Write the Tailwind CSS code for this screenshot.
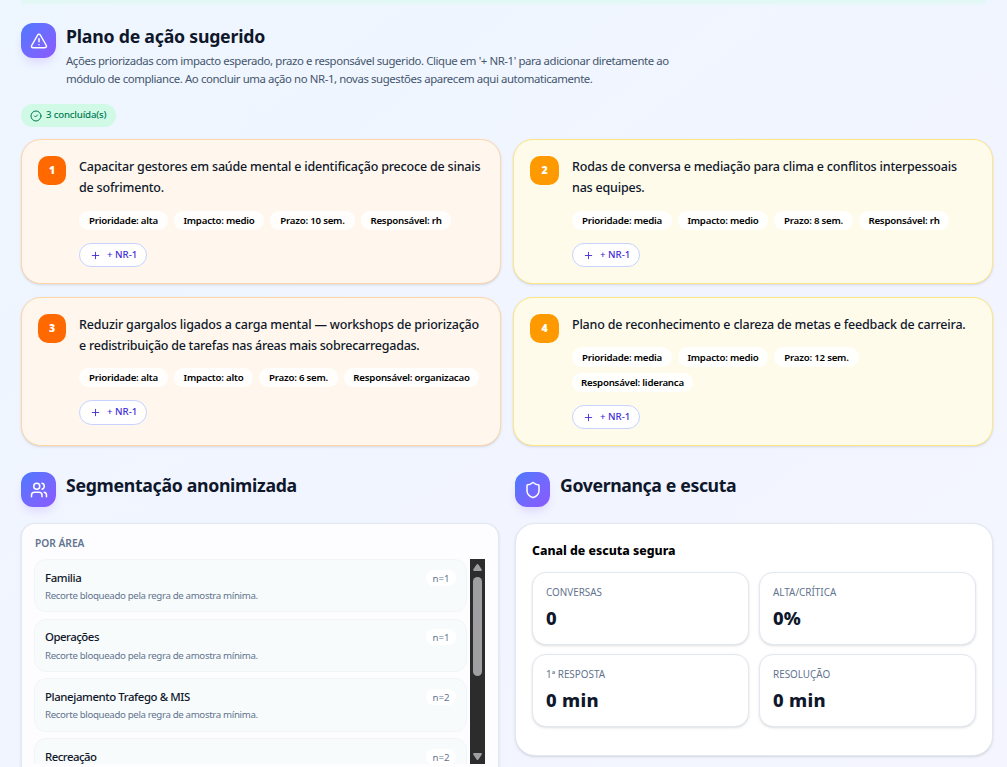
<!DOCTYPE html>
<html lang="pt-BR">

<head>
    <meta charset="UTF-8">
    <meta name="viewport" content="width=device-width, initial-scale=1.0">
    <title>Plano de ação</title>
    <script src="https://cdn.jsdelivr.net/npm/@tailwindcss/browser@4"></script>
</head>

<body class="h-screen overflow-hidden bg-linear-to-br from-[#eef6ff] via-[#f1f5ff] to-[#f4f5ff] font-['Noto_Sans',sans-serif] text-slate-900">

    <!-- Bottom edge of the previous panel -->
    <div class="mx-[21px] h-[3px] rounded-b-full bg-[#e2f8f5] shadow-[0_1px_4px_#e2f8f5]"></div>

    <main class="px-[21px] pr-[14px]">

        <!-- Action plan -->
        <section>
            <div class="flex items-start gap-[10px] pt-5">
                <div class="flex size-[35px] shrink-0 items-center justify-center rounded-[12px] bg-linear-to-br from-[#4a79ff] to-[#8a58ff] text-white shadow-[0_6px_10px_-2px_#ddd6fe]">
                    <svg class="size-[18px]" viewBox="0 0 24 24" fill="none" stroke="currentColor" stroke-width="2" stroke-linecap="round" stroke-linejoin="round">
                        <path d="m21.73 18-8-14a2 2 0 0 0-3.48 0l-8 14A2 2 0 0 0 4 21h16a2 2 0 0 0 1.73-3" />
                        <path d="M12 9v4" />
                        <path d="M12 17h.01" />
                    </svg>
                </div>
                <div>
                    <h2 class="text-[17.7px] leading-[26px] font-bold tracking-[-0.22px]">Plano de ação sugerido</h2>
                    <p class="mt-[3px] text-[11.4px] leading-[18px] tracking-[-0.41px] whitespace-nowrap text-slate-600">Ações priorizadas com impacto esperado, prazo e responsável sugerido. Clique em '+ NR-1' para adicionar diretamente ao<br>módulo de compliance. Ao concluir uma ação no NR-1, novas sugestões aparecem aqui automaticamente.</p>
                </div>
            </div>

            <div class="mt-4 flex h-[23px] w-[95px] items-center gap-1 rounded-full bg-[#d0fae5] pl-[9px] text-[9.7px] font-medium tracking-[-0.2px] whitespace-nowrap text-[#007a55]">
                <svg class="size-[12px] shrink-0" viewBox="0 0 24 24" fill="none" stroke="currentColor" stroke-width="2" stroke-linecap="round" stroke-linejoin="round">
                    <circle cx="12" cy="12" r="10" />
                    <path d="m9 12 2 2 4-4" />
                </svg>
                3 concluída(s)
            </div>

            <div class="mt-3 grid grid-cols-2 grid-rows-[145px_149px] gap-x-3 gap-y-[13px]">
                <article class="flex items-start gap-[13px] rounded-[20px] border border-[#ffd6a8] bg-[#fff7ed] pt-4 pl-4 shadow-sm">
                    <span class="flex h-[29px] w-[28px] shrink-0 items-center justify-center rounded-[10px] bg-[#ff6900] text-[10.5px] font-black text-white">1</span>
                    <div>
                        <p class="text-[12.5px] leading-[21px] font-medium tracking-[-0.19px] whitespace-nowrap">Capacitar gestores em saúde mental e identificação precoce de sinais<br>de sofrimento.</p>
                        <div class="mt-[13px] flex gap-[6px] text-[9.7px] leading-[19px] font-semibold tracking-[-0.23px] whitespace-nowrap text-black">
                            <span class="w-[89px] rounded-full bg-white/90 text-center">Prioridade: alta</span>
                            <span class="w-[90px] rounded-full bg-white/90 text-center">Impacto: medio</span>
                            <span class="w-[85px] rounded-full bg-white/90 text-center">Prazo: 10 sem.</span>
                            <span class="w-[90px] rounded-full bg-white/90 text-center">Responsável: rh</span>
                        </div>
                        <button class="mt-[13px] flex h-6 w-[68px] items-center gap-[6px] rounded-full border border-[#c6d2ff] bg-white pt-px pl-[10px] text-[9.7px] font-medium text-[#432dd7]">
                            <svg class="-mt-px size-[11px] shrink-0" viewBox="0 0 24 24" fill="none" stroke="currentColor" stroke-width="2" stroke-linecap="round"><path d="M5 12h14M12 5v14" /></svg>
                            + NR-1
                        </button>
                    </div>
                </article>

                <article class="flex items-start gap-[13px] rounded-[20px] border border-[#fee685] bg-[#fffbeb] pt-4 pl-4 shadow-sm">
                    <span class="flex size-[29px] shrink-0 items-center justify-center rounded-[10px] bg-[#fe9a00] text-[10.5px] font-black text-white">2</span>
                    <div>
                        <p class="text-[12.5px] leading-[21px] font-medium tracking-[-0.19px] whitespace-nowrap">Rodas de conversa e mediação para clima e conflitos interpessoais<br>nas equipes.</p>
                        <div class="mt-[13px] flex gap-[6px] text-[9.7px] leading-[19px] font-semibold tracking-[-0.23px] whitespace-nowrap text-black">
                            <span class="w-[100px] rounded-full bg-white/90 text-center">Prioridade: media</span>
                            <span class="w-[90px] rounded-full bg-white/90 text-center">Impacto: medio</span>
                            <span class="w-[79px] rounded-full bg-white/90 text-center">Prazo: 8 sem.</span>
                            <span class="w-[90px] rounded-full bg-white/90 text-center">Responsável: rh</span>
                        </div>
                        <button class="mt-[13px] flex h-6 w-[68px] items-center gap-[6px] rounded-full border border-[#c6d2ff] bg-white pt-px pl-[10px] text-[9.7px] font-medium text-[#432dd7]">
                            <svg class="-mt-px size-[11px] shrink-0" viewBox="0 0 24 24" fill="none" stroke="currentColor" stroke-width="2" stroke-linecap="round"><path d="M5 12h14M12 5v14" /></svg>
                            + NR-1
                        </button>
                    </div>
                </article>

                <article class="flex items-start gap-[13px] rounded-[20px] border border-[#ffd6a8] bg-[#fff7ed] pt-4 pl-4 shadow-sm">
                    <span class="flex h-[29px] w-[28px] shrink-0 items-center justify-center rounded-[10px] bg-[#ff6900] text-[10.5px] font-black text-white">3</span>
                    <div>
                        <p class="text-[12.5px] leading-[21px] font-medium tracking-[-0.18px] whitespace-nowrap">Reduzir gargalos ligados a carga mental — workshops de priorização<br><span class="tracking-[-0.25px]">e redistribuição de tarefas nas áreas mais sobrecarregadas.</span></p>
                        <div class="mt-3 flex gap-[6px] text-[9.7px] leading-[19px] font-semibold tracking-[-0.23px] whitespace-nowrap text-black">
                            <span class="w-[89px] rounded-full bg-white/90 text-center">Prioridade: alta</span>
                            <span class="w-[79px] rounded-full bg-white/90 text-center">Impacto: alto</span>
                            <span class="w-[79px] rounded-full bg-white/90 text-center">Prazo: 6 sem.</span>
                            <span class="w-[135px] rounded-full bg-white/90 text-center">Responsável: organizacao</span>
                        </div>
                        <button class="mt-[13px] flex h-[25px] w-[68px] items-center gap-[6px] rounded-full border border-[#c6d2ff] bg-white pl-[10px] text-[9.7px] font-medium text-[#432dd7]">
                            <svg class="size-[11px] shrink-0" viewBox="0 0 24 24" fill="none" stroke="currentColor" stroke-width="2" stroke-linecap="round"><path d="M5 12h14M12 5v14" /></svg>
                            + NR-1
                        </button>
                    </div>
                </article>

                <article class="flex items-start gap-[13px] rounded-[20px] border border-[#fee685] bg-[#fffbeb] pt-4 pl-4 shadow-sm">
                    <span class="flex size-[29px] shrink-0 items-center justify-center rounded-[10px] bg-[#fe9a00] text-[10.5px] font-black text-white">4</span>
                    <div>
                        <p class="text-[12.5px] leading-[21px] font-medium tracking-[-0.19px] whitespace-nowrap">Plano de reconhecimento e clareza de metas e feedback de carreira.</p>
                        <div class="mt-3 flex w-[400px] flex-wrap gap-x-[6px] gap-y-[6px] text-[9.7px] leading-[19px] font-semibold tracking-[-0.23px] whitespace-nowrap text-black">
                            <span class="h-5 w-[100px] rounded-full bg-white/90 pt-px text-center">Prioridade: media</span>
                            <span class="h-5 w-[90px] rounded-full bg-white/90 pt-px text-center">Impacto: medio</span>
                            <span class="h-5 w-[85px] rounded-full bg-white/90 pt-px text-center">Prazo: 12 sem.</span>
                            <span class="w-[121px] rounded-full bg-white/90 text-center">Responsável: lideranca</span>
                        </div>
                        <button class="mt-[13px] flex h-6 w-[68px] items-center gap-[6px] rounded-full border border-[#c6d2ff] bg-white pt-px pl-[10px] text-[9.7px] font-medium text-[#432dd7]">
                            <svg class="-mt-px size-[11px] shrink-0" viewBox="0 0 24 24" fill="none" stroke="currentColor" stroke-width="2" stroke-linecap="round"><path d="M5 12h14M12 5v14" /></svg>
                            + NR-1
                        </button>
                    </div>
                </article>
            </div>
        </section>

        <div class="mt-[26px] grid grid-cols-2 gap-4">

            <!-- Segmentation -->
            <section>
                <div class="flex items-start gap-[10px]">
                    <div class="flex size-[35px] shrink-0 items-center justify-center rounded-[12px] bg-linear-to-br from-[#4a79ff] to-[#8a58ff] text-white shadow-[0_6px_10px_-2px_#ddd6fe]">
                        <svg class="size-[18px]" viewBox="0 0 24 24" fill="none" stroke="currentColor" stroke-width="2" stroke-linecap="round" stroke-linejoin="round">
                            <path d="M16 21v-2a4 4 0 0 0-4-4H6a4 4 0 0 0-4 4v2" />
                            <path d="M16 3.13a4 4 0 0 1 0 7.75" />
                            <path d="M22 21v-2a4 4 0 0 0-3-3.87" />
                            <circle cx="9" cy="7" r="4" />
                        </svg>
                    </div>
                    <h2 class="text-[17.7px] leading-[26px] font-bold tracking-[-0.31px]">Segmentação anonimizada</h2>
                </div>
                <div class="mt-4 h-[244px] rounded-t-[14px] border border-b-0 border-slate-200 bg-[#fdfdff] px-3 pt-[11px] shadow-sm">
                    <h3 class="pl-px text-[10.2px] leading-[17px] font-semibold text-slate-500">POR ÁREA</h3>
                    <div class="mt-[7px] flex h-[205px] overflow-hidden">
                        <div class="flex w-[433px] flex-col gap-[7px]">
                            <div class="flex h-[53px] shrink-0 justify-between rounded-[12px] border border-slate-100 bg-[#f8fbfc] px-[10px] pt-[10px]">
                                <div class="-mt-px">
                                    <p class="text-[11.4px] leading-[17px] font-medium tracking-[-0.38px]">Familia</p>
                                    <p class="mt-[2px] text-[9.7px] leading-4 tracking-[-0.35px] text-slate-500">Recorte bloqueado pela regra de amostra mínima.</p>
                                </div>
                                <span class="h-4 w-[30px] rounded-full bg-white text-center text-[9.7px] leading-[17px] text-slate-500">n=1</span>
                            </div>
                            <div class="flex h-[53px] shrink-0 justify-between rounded-[12px] border border-slate-100 bg-[#f8fbfc] px-[10px] pt-[9px]">
                                <div class="-mt-px">
                                    <p class="text-[11.4px] leading-[17px] font-medium tracking-[-0.48px]">Operações</p>
                                    <p class="mt-[3px] text-[9.7px] leading-4 tracking-[-0.35px] text-slate-500">Recorte bloqueado pela regra de amostra mínima.</p>
                                </div>
                                <span class="h-4 w-[30px] rounded-full bg-white text-center text-[9.7px] leading-[17px] text-slate-500">n=1</span>
                            </div>
                            <div class="-mt-px flex h-[54px] shrink-0 justify-between rounded-[12px] border border-slate-100 bg-[#f8fbfc] px-[10px] pt-[10px]">
                                <div class="-mt-px">
                                    <p class="text-[11.4px] leading-[17px] font-medium tracking-[-0.4px]">Planejamento Trafego &amp; MIS</p>
                                    <p class="mt-[2px] text-[9.7px] leading-4 tracking-[-0.35px] text-slate-500">Recorte bloqueado pela regra de amostra mínima.</p>
                                </div>
                                <span class="h-4 w-[30px] rounded-full bg-white text-center text-[9.7px] leading-[17px] text-slate-500">n=2</span>
                            </div>
                            <div class="-mt-px flex h-[54px] shrink-0 justify-between rounded-[12px] border border-slate-100 bg-[#f8fbfc] px-[10px] pt-[10px]">
                                <p class="-mt-px text-[11.4px] leading-[17px] font-medium tracking-[-0.5px]">Recreação</p>
                                <span class="h-4 w-[30px] rounded-full bg-white text-center text-[9.7px] leading-[17px] text-slate-500">n=2</span>
                            </div>
                        </div>
                        <!-- Scrollbar -->
                        <div class="ml-[3px] flex w-[15px] shrink-0 flex-col items-center bg-[#2c2c2c] text-[#9f9fa3]">
                            <svg class="mt-[5px] h-[7px] w-[9px] shrink-0" viewBox="0 0 9 7" fill="currentColor"><path d="M4.5 0 Q5 0 5.4 .6 L8.8 5.6 Q9 7 8 7 H1 Q0 7 .2 5.6 L3.6 .6 Q4 0 4.5 0Z" /></svg>
                            <div class="mt-[6px] h-[99px] w-[9px] shrink-0 rounded-full bg-[#9f9fa3]"></div>
                            <svg class="mt-auto mb-[4px] h-[7px] w-[9px] shrink-0" viewBox="0 0 9 7" fill="currentColor"><path d="M4.5 7 Q5 7 5.4 6.4 L8.8 1.4 Q9 0 8 0 H1 Q0 0 .2 1.4 L3.6 6.4 Q4 7 4.5 7Z" /></svg>
                        </div>
                    </div>
                </div>
            </section>

            <!-- Governance -->
            <section>
                <div class="flex items-start gap-[10px]">
                    <div class="flex size-[35px] shrink-0 items-center justify-center rounded-[12px] bg-linear-to-br from-[#4a79ff] to-[#8a58ff] text-white shadow-[0_6px_10px_-2px_#ddd6fe]">
                        <svg class="size-[18px]" viewBox="0 0 24 24" fill="none" stroke="currentColor" stroke-width="2" stroke-linecap="round" stroke-linejoin="round">
                            <path d="M20 13c0 5-3.5 7.5-7.66 8.95a1 1 0 0 1-.67-.01C7.5 20.5 4 18 4 13V6a1 1 0 0 1 1-1c2 0 4.5-1.2 6.24-2.72a1.17 1.17 0 0 1 1.52 0C14.51 3.81 17 5 19 5a1 1 0 0 1 1 1z" />
                        </svg>
                    </div>
                    <h2 class="text-[17.7px] leading-[26px] font-bold tracking-[-0.38px]">Governança e escuta</h2>
                </div>
                <div class="mt-4 h-[233px] rounded-[20px] border border-slate-200 bg-white px-4 pt-4 shadow-sm">
                    <h3 class="text-[12.3px] leading-[21px] font-extrabold text-black">Canal de escuta segura</h3>
                    <div class="mt-[11px] grid grid-cols-2 grid-rows-[73px_73px] gap-x-[10px] gap-y-[9px]">
                        <div class="rounded-[14px] border border-slate-200 bg-white px-[13px] pt-[11px] shadow-sm">
                            <p class="text-[9.9px] leading-[17px] text-slate-500">CONVERSAS</p>
                            <p class="mt-[5px] text-[18.4px] leading-6 font-extrabold tracking-[0.2px]">0</p>
                        </div>
                        <div class="rounded-[14px] border border-slate-200 bg-white px-[13px] pt-[11px] shadow-sm">
                            <p class="text-[9.9px] leading-[17px] text-slate-500">ALTA/CRÍTICA</p>
                            <p class="mt-[5px] text-[18.4px] leading-6 font-extrabold">0%</p>
                        </div>
                        <div class="rounded-[14px] border border-slate-200 bg-white px-[13px] pt-[11px] shadow-sm">
                            <p class="text-[9.9px] leading-[17px] text-slate-500">1ª RESPOSTA</p>
                            <p class="mt-[5px] text-[18.4px] leading-6 font-extrabold tracking-[0.3px]">0 min</p>
                        </div>
                        <div class="rounded-[14px] border border-slate-200 bg-white px-[13px] pt-[11px] shadow-sm">
                            <p class="text-[9.9px] leading-[17px] text-slate-500">RESOLUÇÃO</p>
                            <p class="mt-[5px] text-[18.4px] leading-6 font-extrabold tracking-[0.3px]">0 min</p>
                        </div>
                    </div>
                </div>
            </section>
        </div>
    </main>

</body>

</html>
